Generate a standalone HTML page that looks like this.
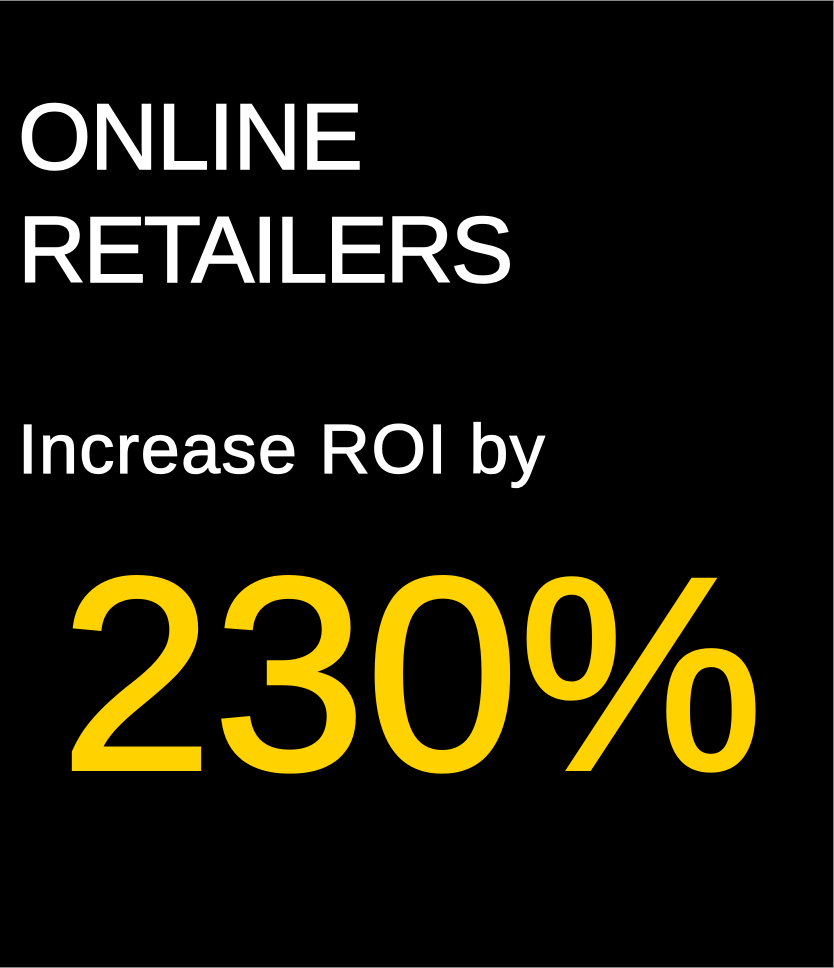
<!DOCTYPE html>
<html><head><style>
html,body{margin:0;padding:0;background:#000;}
.w{position:relative;width:833px;height:966px;background:#000;border-top:1px solid #888;border-right:1px solid #888;border-bottom:1px solid #888;overflow:hidden;font-family:"Liberation Sans",Arial,sans-serif;}
.t{position:absolute;line-height:1;white-space:nowrap;color:#fff;-webkit-text-stroke:1.6px #fff;}
</style></head><body><div class="w">
<div class="t" style="left:18px;top:89px;font-size:94px;letter-spacing:-1px;">ONLINE</div>
<div class="t" style="left:18px;top:202px;font-size:94px;letter-spacing:-2.5px;">RETAILERS</div>
<div class="t" style="left:18px;top:413px;font-size:70px;letter-spacing:1.5px;-webkit-text-stroke:1.3px #fff;">Increase ROI by</div>
<div class="t" style="left:60px;top:536px;font-size:275px;color:#FFD200;-webkit-text-stroke:4px #FFD200;">230%</div>
</div></body></html>
